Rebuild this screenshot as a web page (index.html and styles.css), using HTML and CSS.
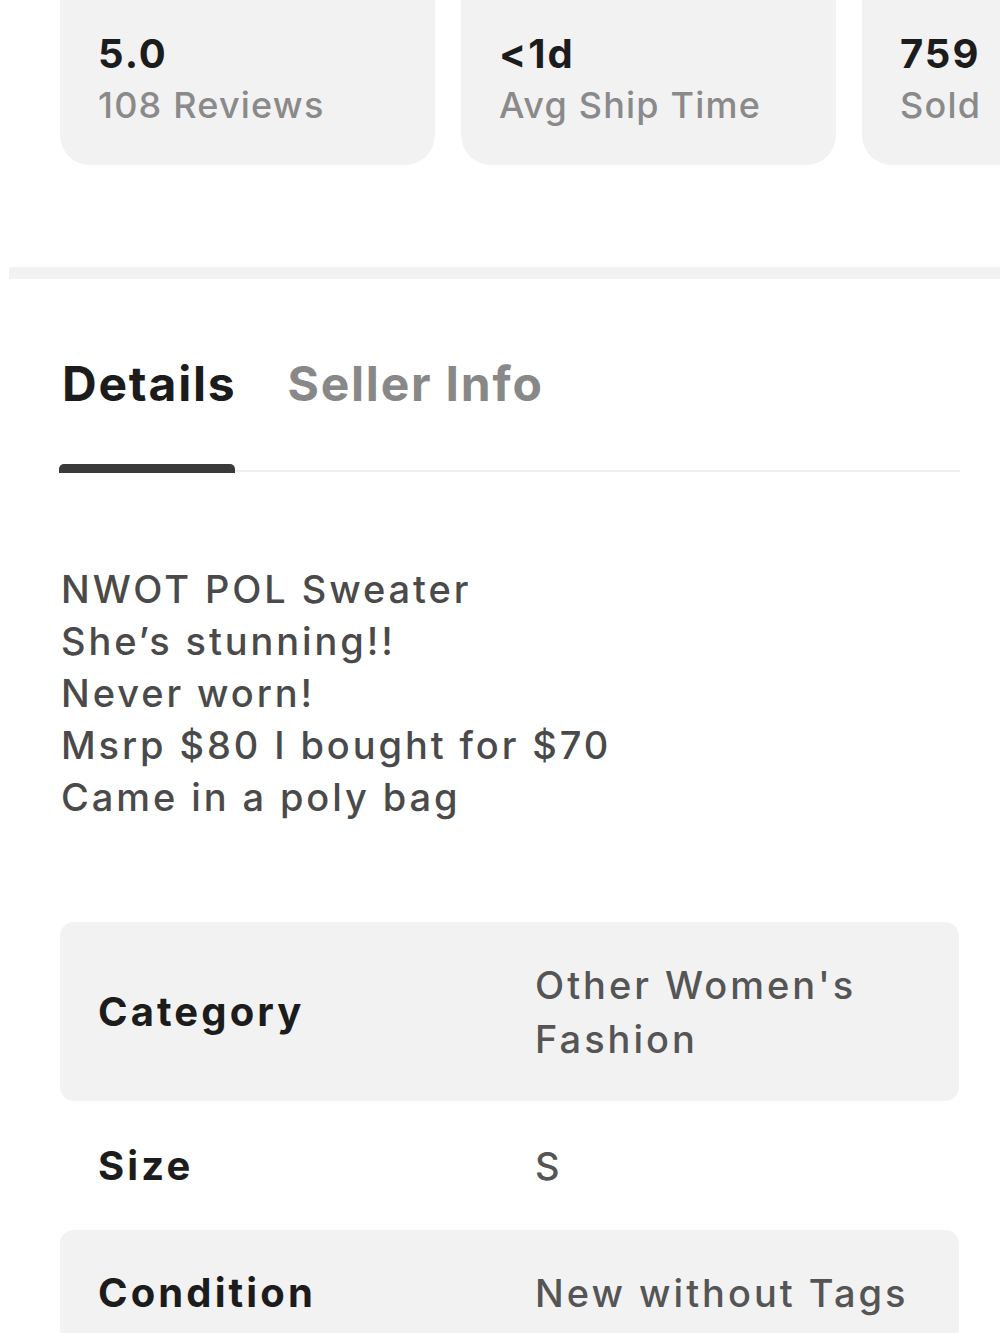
FILE: index.html
```html
<!DOCTYPE html>
<html lang="en">
<head>
<meta charset="utf-8">
<title>Listing details</title>
<link rel="stylesheet" href="styles.css">
</head>
<body>
<div class="page">
  <div class="stats">
    <div class="stat">
      <div class="stat-value">5.0</div>
      <div class="stat-label">108 Reviews</div>
    </div>
    <div class="stat">
      <div class="stat-value">&lt;1d</div>
      <div class="stat-label">Avg Ship Time</div>
    </div>
    <div class="stat">
      <div class="stat-value">759</div>
      <div class="stat-label">Sold</div>
    </div>
  </div>

  <div class="band"></div>

  <div class="tabs">
    <div class="tab-row">
      <div class="tab tab-active">Details</div>
      <div class="tab">Seller Info</div>
    </div>
    <div class="tab-track">
      <div class="indicator"></div>
      <div class="track-line"></div>
    </div>
  </div>

  <div class="description">
    <div>NWOT POL Sweater</div>
    <div>She’s stunning!!</div>
    <div>Never worn!</div>
    <div>Msrp $80 I bought for $70</div>
    <div>Came in a poly bag</div>
  </div>

  <div class="attrs">
    <div class="attr attr-shaded">
      <div class="attr-label">Category</div>
      <div class="attr-value">Other Women's Fashion</div>
    </div>
    <div class="attr">
      <div class="attr-label">Size</div>
      <div class="attr-value">S</div>
    </div>
    <div class="attr attr-shaded">
      <div class="attr-label">Condition</div>
      <div class="attr-value">New without Tags</div>
    </div>
  </div>
</div>
</body>
</html>
```

FILE: styles.css
```css
* { box-sizing: border-box; }
html, body {
  margin: 0;
  padding: 0;
  background: #ffffff;
}
body {
  font-family: Inter, "Noto Sans", "Liberation Sans", sans-serif;
  width: 1000px;
  height: 1333px;
  overflow: hidden;
}
.page {
  width: 1000px;
}

/* stats cards */
.stats {
  display: flex;
  gap: 26px;
  padding-left: 60px;
  overflow: hidden;
  margin-top: -40px;
}
.stat {
  flex: 0 0 375px;
  height: 205px;
  background: #f2f2f2;
  border-radius: 30px;
  padding: 68px 0 0 38px;
}
.stat-value {
  font-size: 40px;
  line-height: 52px;
  font-weight: 700;
  letter-spacing: 2px;
  color: #1c1c1c;
}
.stat-label {
  font-size: 36px;
  line-height: 50px;
  font-weight: 500;
  letter-spacing: 1.2px;
  color: #8a8a8a;
}

.band {
  margin: 102px 0 0 9px;
  height: 12px;
  background: #f2f2f2;
}

/* tabs */
.tabs {
  padding: 75px 40px 0 59px;
}
.tab-row {
  display: flex;
  gap: 51px;
  padding-left: 3px;
}
.tab {
  font-size: 48px;
  line-height: 60px;
  font-weight: 700;
  letter-spacing: 1.8px;
  color: #888888;
}
.tab-active {
  color: #1c1c1c;
}
.tab-track {
  display: flex;
  align-items: flex-end;
  margin-top: 50px;
  height: 9px;
}
.indicator {
  width: 176px;
  height: 9px;
  background: #3a3a3a;
  border-radius: 5px 5px 0 0;
}
.track-line {
  flex: 1;
  height: 2px;
  margin-bottom: 1px;
  background: #eeeeee;
}

/* description */
.description {
  padding: 90px 40px 0 61px;
  font-size: 38px;
  line-height: 52px;
  font-weight: 500;
  letter-spacing: 2.9px;
  color: #4a4a4a;
}

/* attributes table */
.attrs {
  margin: 99px 41px 0 60px;
}
.attr {
  display: grid;
  grid-template-columns: 437px 1fr;
  align-items: center;
  padding: 37.5px 20px 37.5px 38px;
  border-radius: 14px;
}
.attr-shaded {
  background: #f2f2f2;
  padding-top: 35.5px;
  padding-bottom: 35.5px;
}
.attr-label {
  font-size: 40px;
  line-height: 54px;
  font-weight: 700;
  letter-spacing: 3.1px;
  color: #1c1c1c;
}
.attr-value {
  font-size: 38px;
  line-height: 54px;
  font-weight: 500;
  letter-spacing: 3px;
  color: #555555;
}
```
